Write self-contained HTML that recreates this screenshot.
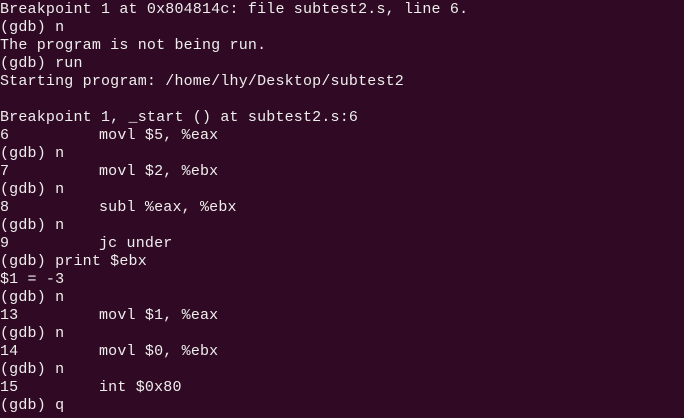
<!DOCTYPE html>
<html><head><style>
html,body{margin:0;padding:0;}
body{width:684px;height:418px;background:#300a24;overflow:hidden;position:relative;}
.l{position:absolute;left:0;height:18px;line-height:18px;font-family:"Liberation Mono",monospace;font-size:15px;letter-spacing:0.18px;color:#eeeeec;white-space:pre;}
.t{position:absolute;left:99px;top:0;}
</style></head><body>
<div class="l" style="top:1px">Breakpoint 1 at 0x804814c: file subtest2.s, line 6.</div>
<div class="l" style="top:19px">(gdb) n</div>
<div class="l" style="top:37px">The program is not being run.</div>
<div class="l" style="top:55px">(gdb) run</div>
<div class="l" style="top:73px">Starting program: /home/lhy/Desktop/subtest2</div>
<div class="l" style="top:109px">Breakpoint 1, _start () at subtest2.s:6</div>
<div class="l" style="top:127px">6<span class="t">movl $5, %eax</span></div>
<div class="l" style="top:145px">(gdb) n</div>
<div class="l" style="top:163px">7<span class="t">movl $2, %ebx</span></div>
<div class="l" style="top:181px">(gdb) n</div>
<div class="l" style="top:199px">8<span class="t">subl %eax, %ebx</span></div>
<div class="l" style="top:217px">(gdb) n</div>
<div class="l" style="top:235px">9<span class="t">jc under</span></div>
<div class="l" style="top:253px">(gdb) print $ebx</div>
<div class="l" style="top:271px">$1 = -3</div>
<div class="l" style="top:289px">(gdb) n</div>
<div class="l" style="top:307px">13<span class="t">movl $1, %eax</span></div>
<div class="l" style="top:325px">(gdb) n</div>
<div class="l" style="top:343px">14<span class="t">movl $0, %ebx</span></div>
<div class="l" style="top:361px">(gdb) n</div>
<div class="l" style="top:379px">15<span class="t">int $0x80</span></div>
<div class="l" style="top:397px">(gdb) q</div>
</body></html>
